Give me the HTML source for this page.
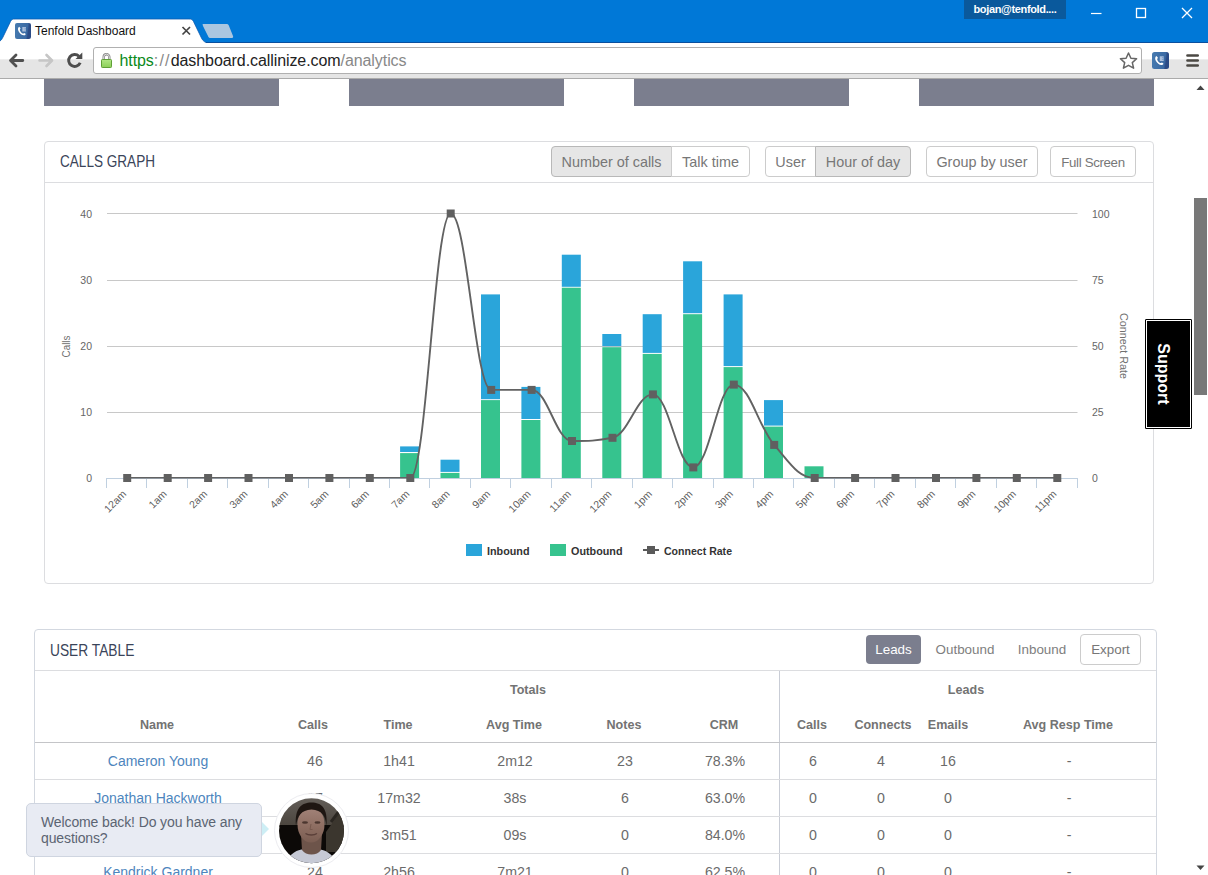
<!DOCTYPE html>
<html lang="en">
<head>
<meta charset="utf-8">
<title>Tenfold Dashboard</title>
<style>
*{box-sizing:border-box;margin:0;padding:0}
html,body{width:1208px;height:875px;overflow:hidden;background:#fff}
body{position:relative;font-family:"Liberation Sans",sans-serif;color:#666}
.abs{position:absolute}
/* ---------- browser chrome ---------- */
#titlebar{position:absolute;left:0;top:0;width:1208px;height:43px;background:#0078d7;border-bottom:1px solid #0a4f9e}
#userbadge{position:absolute;left:964px;top:0;width:102px;height:19px;background:#0a599c;color:#fff;font-size:11px;font-weight:bold;line-height:18px;text-align:center;letter-spacing:-0.35px}
#tabtitle{position:absolute;left:35px;top:23px;font-size:12px;line-height:16px;color:#111;white-space:nowrap}
#toolbar{position:absolute;left:0;top:43px;width:1208px;height:36px;background:linear-gradient(#fff 0,#fff 15.5px,#e5e5e5 17px,#e5e5e5 100%);border-bottom:1px solid #ababab}
#urlbox{position:absolute;left:93px;top:47px;width:1049px;height:27px;background:#fff;border:1px solid #b0b0b0;border-radius:3px}
#url{position:absolute;left:119.500px;top:51px;font-size:16px;line-height:20px;white-space:nowrap;color:#222;letter-spacing:-0.080px}
#url .g{color:#0b8a1a}#url .m{color:#888}
/* ---------- page ---------- */
.blk{position:absolute;top:79px;height:27px;background:#7b7e8e}
.panel{position:absolute;border:1px solid #dcdde0;border-radius:4px;background:#fff}
.phead{position:absolute;left:0;right:0;top:0;height:41px;border-bottom:1px solid #dcdde0}
.ptitle{position:absolute;font-size:16.2px;line-height:20px;color:#3a4459;white-space:nowrap;transform-origin:0 50%}
.btn{position:absolute;top:146px;height:31px;border:1px solid #ccc;background:#fff;color:#777;font-size:14.4px;line-height:31px;text-align:center;white-space:nowrap}
.btn.on{background:#e6e6e6;border-color:#b8b8b8}
.th{position:absolute;font-size:13.5px;transform:scaleX(.93);line-height:18px;font-weight:bold;color:#737373;text-align:center;white-space:nowrap}
.td{position:absolute;font-size:14.2px;line-height:18px;color:#6b6b6b;text-align:center;white-space:nowrap}
.td.lnk{color:#4d85bd;font-size:14px}
.hl{position:absolute;left:35px;width:1121px;height:1px;background:#dcdde0}
.tab{position:absolute;top:641px;font-size:13.4px;line-height:18px;color:#7e7e7e;white-space:nowrap;text-align:center}
</style>
</head>
<body>

<!-- ================= Browser chrome ================= -->
<div id="titlebar"></div>
<svg class="abs" style="left:0;top:0" width="1208" height="79" viewBox="0 0 1208 79">
  <!-- active tab -->
  <path d="M0 44 L0 41 C1.500 40 2 39 3 37 L10.500 21.500 C11.500 19.500 12.500 19 15 19 L189 19 C191.500 19 192.500 19.500 193.500 21.500 L201 37 C202 39.500 203.500 41.500 206 42.500 L206 44 Z" fill="#fff"/>
  <path d="M0 41 C1.500 40 2 39 3 37 L10.500 21.500 C11.500 19.500 12.500 19 15 19 L189 19 C191.500 19 192.500 19.500 193.500 21.500 L201 37 C202 39.500 203.500 41.500 206 42.500" fill="none" stroke="#0d5bb0" stroke-width="1" stroke-opacity="0.800"/>
  <!-- new tab button -->
  <path d="M203 24 L226 24 C228 24 228.500 24.500 229 26 L233 36 C233.500 37.500 233 38 231 38 L211 38 C209 38 208.500 37.500 208 36 L203 26 C202.500 24.500 202.500 24 203 24 Z" fill="#aac6e0"/>
  <!-- favicon -->
  <linearGradient id="fg" x1="0" y1="0" x2="1" y2="0.150"><stop offset="0" stop-color="#477bb0"/><stop offset="0.800" stop-color="#3b6aa3"/><stop offset="0.900" stop-color="#2b4b86"/><stop offset="1" stop-color="#2b4b86"/></linearGradient><rect x="15" y="23" width="16" height="16" rx="2" fill="url(#fg)"/>
  <g>
    <path d="M19.300 26.700 C17.700 27.500 17.600 29.600 18.700 31.400 C19.900 33.500 21.800 35 24 35.300 C25.100 35.500 25.900 34.600 25.600 33.700 L24.200 32.900 C23.600 33.500 23 33.600 22.200 33.200 C21.200 32.600 20.400 31.600 20 30.400 C19.800 29.600 20 29 20.700 28.600 Z" fill="#fff"/>
    <rect x="22.300" y="27" width="3.700" height="4.500" fill="#a9bedb"/>
    <path d="M24.500 28.300H26M24.500 30H26" stroke="#6f93c2" stroke-width="0.800"/>
  </g>
  <!-- tab close -->
  <path d="M182.500 27 L190 34.500 M190 27 L182.500 34.500" stroke="#444" stroke-width="1.700"/>
  <!-- window controls -->
  <path d="M1091 13.500H1101.500" stroke="#fff" stroke-width="1.200"/>
  <rect x="1136.500" y="8.500" width="9" height="9" fill="none" stroke="#fff" stroke-width="1.300"/>
  <path d="M1182 8 L1192 18 M1192 8 L1182 18" stroke="#fff" stroke-width="1.300"/>
</svg>
<div id="userbadge">bojan@tenfold....</div>
<div id="tabtitle">Tenfold Dashboard</div>

<div id="toolbar"></div>
<div id="urlbox"></div>
<svg class="abs" style="left:0;top:42px" width="1208" height="37" viewBox="0 42 1208 37">
  <!-- back -->
  <path d="M22.800 60.500H12M16 55 L10.500 60.500 L16 66" stroke="#505050" stroke-width="2.800" fill="none" stroke-linecap="round" stroke-linejoin="round"/>
  <!-- forward (disabled) -->
  <path d="M39.500 60.500H50.500M46.500 55 L52 60.500 L46.500 66" stroke="#c6c6c6" stroke-width="2.600" fill="none" stroke-linecap="round" stroke-linejoin="round"/>
  <!-- reload -->
  <path d="M79 56.300 A6 6 0 1 0 80.200 62.800" stroke="#4d4d4d" stroke-width="2.900" fill="none"/>
  <path d="M75.500 59 L82.300 59 L82.300 52.500 Z" fill="#4d4d4d"/>
  <!-- lock -->
  <linearGradient id="lk" x1="0" y1="0" x2="0" y2="1"><stop offset="0" stop-color="#b0e684"/><stop offset="1" stop-color="#8ccf58"/></linearGradient>
  <path d="M103.700 59.500 V57 A2.800 2.800 0 0 1 109.300 57 V59.500" stroke="#858585" stroke-width="2.400" fill="none"/>
  <path d="M103.700 59.500 V57 A2.800 2.800 0 0 1 109.300 57 V59.500" stroke="#f4f4f4" stroke-width="0.800" fill="none"/>
  <rect x="101.500" y="59.500" width="10" height="8" rx="0.800" fill="url(#lk)" stroke="#5f9f36" stroke-width="1"/>
  <!-- star -->
  <path d="M1128.500 53 L1130.900 58.200 L1136.600 58.800 L1132.300 62.600 L1133.600 68.200 L1128.500 65.300 L1123.400 68.200 L1124.700 62.600 L1120.400 58.800 L1126.100 58.200 Z" fill="#fff" stroke="#666" stroke-width="1.500" stroke-linejoin="round"/>
  <!-- extension icon -->
  <linearGradient id="eg" x1="0" y1="0" x2="1" y2="0.150"><stop offset="0" stop-color="#477bb0"/><stop offset="0.800" stop-color="#3b6aa3"/><stop offset="0.900" stop-color="#2b4b86"/><stop offset="1" stop-color="#2b4b86"/></linearGradient><rect x="1152" y="52" width="17" height="17" rx="2.500" fill="url(#eg)"/>
  <g transform="translate(1136.060 27.560) scale(1.0625)">
    <path d="M19.300 26.700 C17.700 27.500 17.600 29.600 18.700 31.400 C19.900 33.500 21.800 35 24 35.300 C25.100 35.500 25.900 34.600 25.600 33.700 L24.200 32.900 C23.600 33.500 23 33.600 22.200 33.200 C21.200 32.600 20.400 31.600 20 30.400 C19.800 29.600 20 29 20.700 28.600 Z" fill="#fff"/>
    <rect x="22.300" y="27" width="3.700" height="4.500" fill="#a9bedb"/>
    <path d="M24.500 28.300H26M24.500 30H26" stroke="#6f93c2" stroke-width="0.800"/>
  </g>
  <!-- menu -->
  <path d="M1187.500 55.500H1197.700M1187.500 60.500H1197.700M1187.500 65.500H1197.700" stroke="#4b4843" stroke-width="2.700" stroke-linecap="round"/>
</svg>
<div id="url"><span class="g">https</span><span class="m" style="letter-spacing:1.200px">://</span>dashboard.callinize.com<span class="m">/analytics</span></div>

<!-- ================= Page ================= -->
<div class="blk" style="left:44px;width:235px"></div>
<div class="blk" style="left:349px;width:215px"></div>
<div class="blk" style="left:634px;width:215px"></div>
<div class="blk" style="left:919px;width:235px"></div>

<!-- Calls graph panel -->
<div class="panel" style="left:44px;top:141px;width:1110px;height:443px">
  <div class="phead"></div>
</div>
<div class="ptitle" id="t1" style="left:60px;top:151px;transform:scaleX(0.838)">CALLS GRAPH</div>
<div class="btn on" style="left:551px;width:121px;border-radius:4px 0 0 4px">Number of calls</div>
<div class="btn" style="left:671px;width:79px;border-radius:0 4px 4px 0">Talk time</div>
<div class="btn" style="left:765px;width:51px;border-radius:4px 0 0 4px">User</div>
<div class="btn on" style="left:815px;width:96px;border-radius:0 4px 4px 0">Hour of day</div>
<div class="btn" style="left:926px;width:112px;border-radius:4px">Group by user</div>
<div class="btn" style="left:1050px;width:86px;border-radius:4px;font-size:13.3px;letter-spacing:-0.35px">Full Screen</div>

<svg class="abs" style="left:0;top:183px;font-family:'Liberation Sans',sans-serif" width="1152" height="400" viewBox="0 183 1152 400">
<path d="M107.0 213.5H1077.5" stroke="#c8c8c8" stroke-width="1"/>
<path d="M107.0 280.5H1077.5" stroke="#c8c8c8" stroke-width="1"/>
<path d="M107.0 346.5H1077.5" stroke="#c8c8c8" stroke-width="1"/>
<path d="M107.0 412.5H1077.5" stroke="#c8c8c8" stroke-width="1"/>
<path d="M106.0 478.5H1077.5" stroke="#c0d0e0" stroke-width="1"/>
<path d="M106.5 478V488" stroke="#c0d0e0" stroke-width="1"/>
<path d="M146.5 478V488" stroke="#c0d0e0" stroke-width="1"/>
<path d="M187.5 478V488" stroke="#c0d0e0" stroke-width="1"/>
<path d="M227.5 478V488" stroke="#c0d0e0" stroke-width="1"/>
<path d="M268.5 478V488" stroke="#c0d0e0" stroke-width="1"/>
<path d="M308.5 478V488" stroke="#c0d0e0" stroke-width="1"/>
<path d="M349.5 478V488" stroke="#c0d0e0" stroke-width="1"/>
<path d="M389.5 478V488" stroke="#c0d0e0" stroke-width="1"/>
<path d="M429.5 478V488" stroke="#c0d0e0" stroke-width="1"/>
<path d="M470.5 478V488" stroke="#c0d0e0" stroke-width="1"/>
<path d="M510.5 478V488" stroke="#c0d0e0" stroke-width="1"/>
<path d="M551.5 478V488" stroke="#c0d0e0" stroke-width="1"/>
<path d="M591.5 478V488" stroke="#c0d0e0" stroke-width="1"/>
<path d="M632.5 478V488" stroke="#c0d0e0" stroke-width="1"/>
<path d="M672.5 478V488" stroke="#c0d0e0" stroke-width="1"/>
<path d="M713.5 478V488" stroke="#c0d0e0" stroke-width="1"/>
<path d="M753.5 478V488" stroke="#c0d0e0" stroke-width="1"/>
<path d="M793.5 478V488" stroke="#c0d0e0" stroke-width="1"/>
<path d="M834.5 478V488" stroke="#c0d0e0" stroke-width="1"/>
<path d="M874.5 478V488" stroke="#c0d0e0" stroke-width="1"/>
<path d="M915.5 478V488" stroke="#c0d0e0" stroke-width="1"/>
<path d="M955.5 478V488" stroke="#c0d0e0" stroke-width="1"/>
<path d="M996.5 478V488" stroke="#c0d0e0" stroke-width="1"/>
<path d="M1036.5 478V488" stroke="#c0d0e0" stroke-width="1"/>
<path d="M1077.5 478V488" stroke="#c0d0e0" stroke-width="1"/>
<rect x="400.1" y="453.1" width="19.0" height="24.9" fill="#36c38e"/>
<rect x="400.1" y="446.4" width="19.0" height="5.6" fill="#2aa5da"/>
<rect x="440.5" y="472.9" width="19.0" height="5.1" fill="#36c38e"/>
<rect x="440.5" y="459.7" width="19.0" height="12.2" fill="#2aa5da"/>
<rect x="481.0" y="400.1" width="19.0" height="77.9" fill="#36c38e"/>
<rect x="481.0" y="294.4" width="19.0" height="104.8" fill="#2aa5da"/>
<rect x="521.4" y="420.0" width="19.0" height="58.0" fill="#36c38e"/>
<rect x="521.4" y="386.9" width="19.0" height="32.1" fill="#2aa5da"/>
<rect x="561.8" y="287.7" width="19.0" height="190.3" fill="#36c38e"/>
<rect x="561.8" y="254.7" width="19.0" height="32.1" fill="#2aa5da"/>
<rect x="602.3" y="347.2" width="19.0" height="130.8" fill="#36c38e"/>
<rect x="602.3" y="334.0" width="19.0" height="12.2" fill="#2aa5da"/>
<rect x="642.7" y="353.9" width="19.0" height="124.1" fill="#36c38e"/>
<rect x="642.7" y="314.2" width="19.0" height="38.7" fill="#2aa5da"/>
<rect x="683.1" y="314.2" width="19.0" height="163.8" fill="#36c38e"/>
<rect x="683.1" y="261.3" width="19.0" height="51.9" fill="#2aa5da"/>
<rect x="723.6" y="367.1" width="19.0" height="110.9" fill="#36c38e"/>
<rect x="723.6" y="294.4" width="19.0" height="71.7" fill="#2aa5da"/>
<rect x="764.0" y="426.6" width="19.0" height="51.4" fill="#36c38e"/>
<rect x="764.0" y="400.1" width="19.0" height="25.5" fill="#2aa5da"/>
<rect x="804.5" y="466.3" width="19.0" height="11.7" fill="#36c38e"/>
<clipPath id="pc"><rect x="107" y="205" width="971" height="273.5"/></clipPath>
<path clip-path="url(#pc)" d="M127.2 478.0 C127.2 478.0 151.5 478.0 167.7 478.0 C183.8 478.0 191.9 478.0 208.1 478.0 C224.3 478.0 232.4 478.0 248.5 478.0 C264.7 478.0 272.8 478.0 289.0 478.0 C305.1 478.0 313.2 478.0 329.4 478.0 C345.6 478.0 353.7 478.0 369.8 478.0 C386.0 478.0 394.1 478.0 410.3 478.0 C426.5 478.0 434.5 213.5 450.7 213.5 C466.9 213.5 475.0 389.9 491.2 389.9 C507.3 389.9 515.4 389.9 531.6 389.9 C547.8 389.9 555.9 441.0 572.0 441.0 C588.2 441.0 596.3 441.0 612.5 437.8 C628.6 434.6 636.7 394.4 652.9 394.4 C669.1 394.4 677.2 467.4 693.3 467.4 C709.5 467.4 717.6 384.6 733.8 384.6 C750.0 384.6 758.0 426.3 774.2 444.9 C790.4 463.6 798.5 478.0 814.7 478.0 C830.8 478.0 838.9 478.0 855.1 478.0 C871.3 478.0 879.4 478.0 895.5 478.0 C911.7 478.0 919.8 478.0 936.0 478.0 C952.1 478.0 960.2 478.0 976.4 478.0 C992.6 478.0 1000.7 478.0 1016.8 478.0 C1033.0 478.0 1057.3 478.0 1057.3 478.0" fill="none" stroke="#626262" stroke-width="1.9" stroke-linejoin="round" stroke-linecap="round"/>
<rect x="123.2" y="474.0" width="8" height="8" fill="#606060"/>
<rect x="163.7" y="474.0" width="8" height="8" fill="#606060"/>
<rect x="204.1" y="474.0" width="8" height="8" fill="#606060"/>
<rect x="244.5" y="474.0" width="8" height="8" fill="#606060"/>
<rect x="285.0" y="474.0" width="8" height="8" fill="#606060"/>
<rect x="325.4" y="474.0" width="8" height="8" fill="#606060"/>
<rect x="365.8" y="474.0" width="8" height="8" fill="#606060"/>
<rect x="406.3" y="474.0" width="8" height="8" fill="#606060"/>
<rect x="446.7" y="209.5" width="8" height="8" fill="#606060"/>
<rect x="487.2" y="385.9" width="8" height="8" fill="#606060"/>
<rect x="527.6" y="385.9" width="8" height="8" fill="#606060"/>
<rect x="568.0" y="437.0" width="8" height="8" fill="#606060"/>
<rect x="608.5" y="433.8" width="8" height="8" fill="#606060"/>
<rect x="648.9" y="390.4" width="8" height="8" fill="#606060"/>
<rect x="689.3" y="463.4" width="8" height="8" fill="#606060"/>
<rect x="729.8" y="380.6" width="8" height="8" fill="#606060"/>
<rect x="770.2" y="440.9" width="8" height="8" fill="#606060"/>
<rect x="810.7" y="474.0" width="8" height="8" fill="#606060"/>
<rect x="851.1" y="474.0" width="8" height="8" fill="#606060"/>
<rect x="891.5" y="474.0" width="8" height="8" fill="#606060"/>
<rect x="932.0" y="474.0" width="8" height="8" fill="#606060"/>
<rect x="972.4" y="474.0" width="8" height="8" fill="#606060"/>
<rect x="1012.8" y="474.0" width="8" height="8" fill="#606060"/>
<rect x="1053.3" y="474.0" width="8" height="8" fill="#606060"/>
<text x="92" y="482.4" text-anchor="end" font-size="10.5" fill="#666">0</text>
<text x="92" y="416.3" text-anchor="end" font-size="10.5" fill="#666">10</text>
<text x="92" y="350.1" text-anchor="end" font-size="10.5" fill="#666">20</text>
<text x="92" y="284.0" text-anchor="end" font-size="10.5" fill="#666">30</text>
<text x="92" y="217.9" text-anchor="end" font-size="10.5" fill="#666">40</text>
<text x="1092" y="482.4" font-size="10.5" fill="#666">0</text>
<text x="1092" y="416.3" font-size="10.5" fill="#666">25</text>
<text x="1092" y="350.1" font-size="10.5" fill="#666">50</text>
<text x="1092" y="284.0" font-size="10.5" fill="#666">75</text>
<text x="1092" y="217.9" font-size="10.5" fill="#666">100</text>
<text x="127.0" y="494.6" text-anchor="end" font-size="10.5" fill="#606060" transform="rotate(-45 127.0 494.6)">12am</text>
<text x="167.5" y="494.6" text-anchor="end" font-size="10.5" fill="#606060" transform="rotate(-45 167.5 494.6)">1am</text>
<text x="207.9" y="494.6" text-anchor="end" font-size="10.5" fill="#606060" transform="rotate(-45 207.9 494.6)">2am</text>
<text x="248.3" y="494.6" text-anchor="end" font-size="10.5" fill="#606060" transform="rotate(-45 248.3 494.6)">3am</text>
<text x="288.8" y="494.6" text-anchor="end" font-size="10.5" fill="#606060" transform="rotate(-45 288.8 494.6)">4am</text>
<text x="329.2" y="494.6" text-anchor="end" font-size="10.5" fill="#606060" transform="rotate(-45 329.2 494.6)">5am</text>
<text x="369.6" y="494.6" text-anchor="end" font-size="10.5" fill="#606060" transform="rotate(-45 369.6 494.6)">6am</text>
<text x="410.1" y="494.6" text-anchor="end" font-size="10.5" fill="#606060" transform="rotate(-45 410.1 494.6)">7am</text>
<text x="450.5" y="494.6" text-anchor="end" font-size="10.5" fill="#606060" transform="rotate(-45 450.5 494.6)">8am</text>
<text x="491.0" y="494.6" text-anchor="end" font-size="10.5" fill="#606060" transform="rotate(-45 491.0 494.6)">9am</text>
<text x="531.4" y="494.6" text-anchor="end" font-size="10.5" fill="#606060" transform="rotate(-45 531.4 494.6)">10am</text>
<text x="571.8" y="494.6" text-anchor="end" font-size="10.5" fill="#606060" transform="rotate(-45 571.8 494.6)">11am</text>
<text x="612.3" y="494.6" text-anchor="end" font-size="10.5" fill="#606060" transform="rotate(-45 612.3 494.6)">12pm</text>
<text x="652.7" y="494.6" text-anchor="end" font-size="10.5" fill="#606060" transform="rotate(-45 652.7 494.6)">1pm</text>
<text x="693.1" y="494.6" text-anchor="end" font-size="10.5" fill="#606060" transform="rotate(-45 693.1 494.6)">2pm</text>
<text x="733.6" y="494.6" text-anchor="end" font-size="10.5" fill="#606060" transform="rotate(-45 733.6 494.6)">3pm</text>
<text x="774.0" y="494.6" text-anchor="end" font-size="10.5" fill="#606060" transform="rotate(-45 774.0 494.6)">4pm</text>
<text x="814.5" y="494.6" text-anchor="end" font-size="10.5" fill="#606060" transform="rotate(-45 814.5 494.6)">5pm</text>
<text x="854.9" y="494.6" text-anchor="end" font-size="10.5" fill="#606060" transform="rotate(-45 854.9 494.6)">6pm</text>
<text x="895.3" y="494.6" text-anchor="end" font-size="10.5" fill="#606060" transform="rotate(-45 895.3 494.6)">7pm</text>
<text x="935.8" y="494.6" text-anchor="end" font-size="10.5" fill="#606060" transform="rotate(-45 935.8 494.6)">8pm</text>
<text x="976.2" y="494.6" text-anchor="end" font-size="10.5" fill="#606060" transform="rotate(-45 976.2 494.6)">9pm</text>
<text x="1016.6" y="494.6" text-anchor="end" font-size="10.5" fill="#606060" transform="rotate(-45 1016.6 494.6)">10pm</text>
<text x="1057.1" y="494.6" text-anchor="end" font-size="10.5" fill="#606060" transform="rotate(-45 1057.1 494.6)">11pm</text>
<text x="70" y="346.5" text-anchor="middle" font-size="10.5" textLength="22" lengthAdjust="spacingAndGlyphs" fill="#707070" transform="rotate(-90 70 346.5)">Calls</text>
<text x="1120" y="346" text-anchor="middle" font-size="11.5" textLength="66" lengthAdjust="spacingAndGlyphs" fill="#707070" transform="rotate(90 1120 346)">Connect Rate</text>
<rect x="466" y="544" width="16" height="12" fill="#2aa5da"/>
<text x="487" y="555" font-size="11.5" font-weight="bold" textLength="42.5" lengthAdjust="spacingAndGlyphs" fill="#333">Inbound</text>
<rect x="550" y="544" width="16" height="12" fill="#36c38e"/>
<text x="571" y="555" font-size="11.5" font-weight="bold" textLength="51.5" lengthAdjust="spacingAndGlyphs" fill="#333">Outbound</text>
<path d="M643 550H659" stroke="#5a5a5a" stroke-width="2"/><rect x="647" y="546" width="8" height="8" fill="#5a5a5a"/>
<text x="664" y="555" font-size="11.5" font-weight="bold" textLength="68" lengthAdjust="spacingAndGlyphs" fill="#333">Connect Rate</text>
</svg>

<!-- User table panel -->
<div class="panel" style="left:34px;top:629px;width:1123px;height:260px;border-radius:4px 4px 0 0;border-color:#d3d8e0">
  <div class="phead"></div>
</div>
<div class="ptitle" id="t2" style="left:50px;top:640px;transform:scaleX(0.85)">USER TABLE</div>
<div class="abs" style="left:866px;top:635px;width:55px;height:29px;border-radius:4px;background:#7b7e8e;color:#fff;font-size:13.400px;line-height:30px;text-align:center">Leads</div>
<div class="tab" style="left:925px;width:80px">Outbound</div>
<div class="tab" style="left:1002px;width:80px">Inbound</div>
<div class="abs" style="left:1080px;top:634px;width:61px;height:31px;border:1px solid #ccc;border-radius:4px;color:#777;font-size:13.400px;line-height:29px;text-align:center">Export</div>

<div class="abs" style="left:779px;top:671px;width:1px;height:204px;background:#c9cdd6"></div>
<div class="hl" style="top:742px;background:#c4c5c8"></div>
<div class="hl" style="top:779px"></div>
<div class="hl" style="top:816px"></div>
<div class="hl" style="top:853px"></div>
<div class="th" style="left:478px;top:681px;width:100px">Totals</div>
<div class="th" style="left:916px;top:681px;width:100px">Leads</div>
<div class="th" style="left:157.0px;top:716px;width:160px;margin-left:-80px">Name</div>
<div class="th" style="left:313.0px;top:716px;width:160px;margin-left:-80px">Calls</div>
<div class="th" style="left:398.0px;top:716px;width:160px;margin-left:-80px">Time</div>
<div class="th" style="left:513.5px;top:716px;width:160px;margin-left:-80px">Avg Time</div>
<div class="th" style="left:624.0px;top:716px;width:160px;margin-left:-80px">Notes</div>
<div class="th" style="left:724.0px;top:716px;width:160px;margin-left:-80px">CRM</div>
<div class="th" style="left:812.0px;top:716px;width:160px;margin-left:-80px">Calls</div>
<div class="th" style="left:882.5px;top:716px;width:160px;margin-left:-80px">Connects</div>
<div class="th" style="left:947.5px;top:716px;width:160px;margin-left:-80px">Emails</div>
<div class="th" style="left:1068.0px;top:716px;width:160px;margin-left:-80px">Avg Resp Time</div>
<div class="td lnk" style="left:158px;top:752px;width:200px;margin-left:-100px">Cameron Young</div>
<div class="td" style="left:315px;top:752px;width:200px;margin-left:-100px">46</div>
<div class="td" style="left:399px;top:752px;width:200px;margin-left:-100px">1h41</div>
<div class="td" style="left:515px;top:752px;width:200px;margin-left:-100px">2m12</div>
<div class="td" style="left:625px;top:752px;width:200px;margin-left:-100px">23</div>
<div class="td" style="left:725px;top:752px;width:200px;margin-left:-100px">78.3%</div>
<div class="td" style="left:813px;top:752px;width:200px;margin-left:-100px">6</div>
<div class="td" style="left:881px;top:752px;width:200px;margin-left:-100px">4</div>
<div class="td" style="left:948px;top:752px;width:200px;margin-left:-100px">16</div>
<div class="td" style="left:1069px;top:752px;width:200px;margin-left:-100px">-</div>
<div class="td lnk" style="left:158px;top:789px;width:200px;margin-left:-100px">Jonathan Hackworth</div>
<div class="td" style="left:315px;top:789px;width:200px;margin-left:-100px">37</div>
<div class="td" style="left:399px;top:789px;width:200px;margin-left:-100px">17m32</div>
<div class="td" style="left:515px;top:789px;width:200px;margin-left:-100px">38s</div>
<div class="td" style="left:625px;top:789px;width:200px;margin-left:-100px">6</div>
<div class="td" style="left:725px;top:789px;width:200px;margin-left:-100px">63.0%</div>
<div class="td" style="left:813px;top:789px;width:200px;margin-left:-100px">0</div>
<div class="td" style="left:881px;top:789px;width:200px;margin-left:-100px">0</div>
<div class="td" style="left:948px;top:789px;width:200px;margin-left:-100px">0</div>
<div class="td" style="left:1069px;top:789px;width:200px;margin-left:-100px">-</div>
<div class="td lnk" style="left:158px;top:826px;width:200px;margin-left:-100px">Marcus Bell</div>
<div class="td" style="left:315px;top:826px;width:200px;margin-left:-100px">25</div>
<div class="td" style="left:399px;top:826px;width:200px;margin-left:-100px">3m51</div>
<div class="td" style="left:515px;top:826px;width:200px;margin-left:-100px">09s</div>
<div class="td" style="left:625px;top:826px;width:200px;margin-left:-100px">0</div>
<div class="td" style="left:725px;top:826px;width:200px;margin-left:-100px">84.0%</div>
<div class="td" style="left:813px;top:826px;width:200px;margin-left:-100px">0</div>
<div class="td" style="left:881px;top:826px;width:200px;margin-left:-100px">0</div>
<div class="td" style="left:948px;top:826px;width:200px;margin-left:-100px">0</div>
<div class="td" style="left:1069px;top:826px;width:200px;margin-left:-100px">-</div>
<div class="td lnk" style="left:158px;top:863px;width:200px;margin-left:-100px">Kendrick Gardner</div>
<div class="td" style="left:315px;top:863px;width:200px;margin-left:-100px">24</div>
<div class="td" style="left:399px;top:863px;width:200px;margin-left:-100px">2h56</div>
<div class="td" style="left:515px;top:863px;width:200px;margin-left:-100px">7m21</div>
<div class="td" style="left:625px;top:863px;width:200px;margin-left:-100px">0</div>
<div class="td" style="left:725px;top:863px;width:200px;margin-left:-100px">62.5%</div>
<div class="td" style="left:813px;top:863px;width:200px;margin-left:-100px">0</div>
<div class="td" style="left:881px;top:863px;width:200px;margin-left:-100px">0</div>
<div class="td" style="left:948px;top:863px;width:200px;margin-left:-100px">0</div>
<div class="td" style="left:1069px;top:863px;width:200px;margin-left:-100px">-</div>

<!-- Scrollbar -->
<div class="abs" style="left:1191px;top:79px;width:17px;height:796px;background:#fff"></div>
<div class="abs" style="left:1194px;top:198px;width:13px;height:197px;background:#787878"></div>
<svg class="abs" style="left:1191px;top:79px" width="17" height="796" viewBox="0 0 17 796">
  <path d="M5.500 11 L9.500 6.500 L13.500 11 Z" fill="#444"/>
  <path d="M5.500 786.500 L13.500 786.500 L9.500 791 Z" fill="#444"/>
</svg>

<!-- Support tab -->
<div class="abs" style="left:1145px;top:319px;width:47px;height:110px;background:#000;border:1px solid #000;border-radius:1px;box-shadow:inset 0 0 0 1px #fff, inset 0 0 0 2px #000"></div>
<div class="abs" style="left:1145px;top:319px;width:47px;height:110px"><div style="position:absolute;left:50%;top:50%;width:100px;height:20px;margin:-10px 0 0 -55.5px;transform:rotate(90deg);color:#fff;font-weight:bold;font-size:16px;line-height:20px;text-align:center">Support</div></div>

<!-- Chat widget -->
<div class="abs" style="left:26px;top:803px;width:236px;height:54px;background:#e8ebf3;border:1px solid #cfd5e0;border-radius:5px"></div>
<div class="abs" id="chat" style="left:41px;top:814px;white-space:nowrap;font-size:14px;line-height:16px;color:#5b6472;letter-spacing:-0.12px">Welcome back! Do you have any<br>questions?</div>
<svg class="abs" style="left:260px;top:785px" width="100" height="90" viewBox="260 785 100 90">
  <path d="M262 822 L269 829 L262 836 Z" fill="#cdeef5"/>
  <circle cx="311.500" cy="830.500" r="37" fill="#fff"/>
  <circle cx="311.500" cy="830.500" r="37" fill="none" stroke="#ececf0" stroke-width="1"/>
  <clipPath id="av"><circle cx="311.500" cy="830.700" r="32.500"/></clipPath>
  <g clip-path="url(#av)">
    <linearGradient id="bgu" x1="0" y1="0" x2="0" y2="1"><stop offset="0" stop-color="#6a6560"/><stop offset="1" stop-color="#4a443d"/></linearGradient>
    <linearGradient id="fc" x1="0" y1="0" x2="0" y2="1"><stop offset="0" stop-color="#a3847a"/><stop offset="0.550" stop-color="#8e6e62"/><stop offset="1" stop-color="#7a5d52"/></linearGradient>
    <rect x="270" y="790" width="90" height="37" fill="url(#bgu)"/>
    <rect x="270" y="825" width="90" height="50" fill="#0c0907"/>
    <path d="M326 832 L340 812 L352 806 L352 852 L326 852 Z" fill="#3b362e"/>
    <path d="M331 822 L343 806" stroke="#2a2621" stroke-width="3"/>
    <path d="M284 868 C288 853 299 847 311 849.500 C323 847 334 853 339 868 Z" fill="#c6c9d5"/>
    <path d="M301 834 L302 850 C306 856 317 856 321 850 L322 834 Z" fill="#6d544a"/>
    <ellipse cx="311" cy="824.500" rx="13.500" ry="18" fill="url(#fc)"/>
    <path d="M296 826 C294.500 808 301.500 802.500 311.500 802.500 C321.500 802.500 328 808 326.500 826 C325.500 816 322 810 311.500 809.500 C301 810 297.500 816 296 826 Z" fill="#1e1612"/>
    <ellipse cx="305" cy="822.500" rx="3" ry="1.300" fill="#4b362f"/>
    <ellipse cx="317.500" cy="822.500" rx="3" ry="1.300" fill="#4b362f"/>
    <path d="M305.500 833.500 C308.500 835.500 314 835.500 317 833.500" stroke="#5a3f38" stroke-width="1.400" fill="none"/>
    <path d="M311 824 L310 829.500 L312.500 829.500" stroke="#77594e" stroke-width="1" fill="none"/>
  </g>

</svg>

</body>
</html>
